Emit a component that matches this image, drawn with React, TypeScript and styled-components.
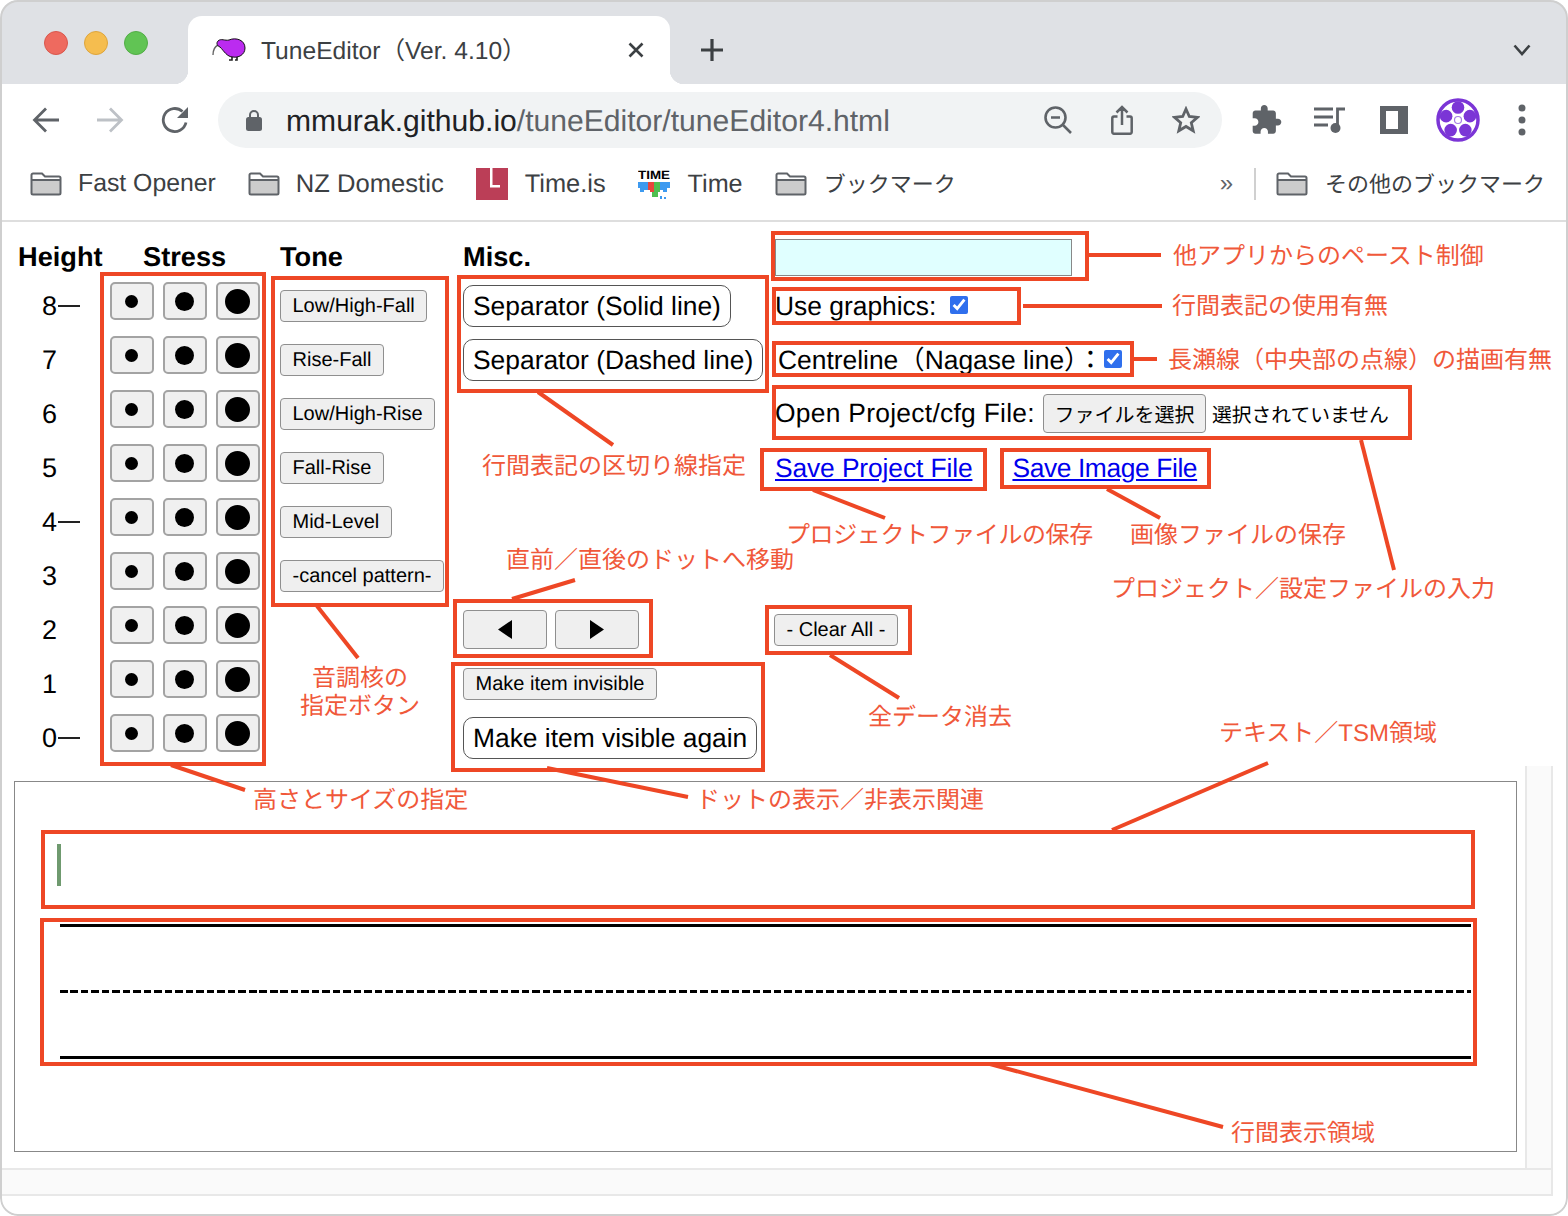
import styled, { createGlobalStyle } from "styled-components";

const UI_FONT = `"Liberation Sans", "Noto Sans CJK JP", sans-serif`;
const RED = "#ee4725";
const ICON_GREY = "#5f6368";

const HEIGHTS = [
  { label: "8", mark: true },
  { label: "7", mark: false },
  { label: "6", mark: false },
  { label: "5", mark: false },
  { label: "4", mark: true },
  { label: "3", mark: false },
  { label: "2", mark: false },
  { label: "1", mark: false },
  { label: "0", mark: true },
];
const DOT_SIZES = [13, 19, 25];
const TONES = ["Low/High-Fall", "Rise-Fall", "Low/High-Rise", "Fall-Rise", "Mid-Level", "-cancel pattern-"];

// red frames over the page: x, y, right, bottom
const FRAMES = [
  [100, 272, 266, 766],
  [271, 276, 449, 607],
  [457, 275, 769, 393],
  [771, 231, 1089, 281],
  [772, 287, 1021, 325],
  [772, 341, 1134, 377],
  [772, 385, 1412, 440],
  [760, 448, 987, 491],
  [1000, 448, 1211, 489],
  [453, 599, 653, 658],
  [451, 662, 765, 772],
  [765, 605, 912, 655],
  [41, 830, 1475, 909],
  [40, 918, 1477, 1066],
];

const LEADERS = [
  [1088, 255, 1161, 255],
  [1023, 306, 1162, 306],
  [1134, 359, 1157, 359],
  [538, 392, 613, 445],
  [813, 490, 885, 518],
  [1107, 489, 1160, 518],
  [1361, 440, 1394, 570],
  [512, 599, 575, 580],
  [317, 606, 358, 658],
  [830, 655, 899, 698],
  [547, 768, 688, 797],
  [171, 765, 245, 790],
  [1112, 830, 1268, 763],
  [990, 1064, 1223, 1127],
];

const CALLOUTS = [
  { x: 1173, y: 257, text: "他アプリからのペースト制御", tight: false },
  { x: 1172, y: 307, text: "行間表記の使用有無", tight: false },
  { x: 1168, y: 361, text: "長瀬線（中央部の点線）の描画有無", tight: false },
  { x: 482, y: 467, text: "行間表記の区切り線指定", tight: false },
  { x: 786, y: 536, text: "プロジェクトファイルの保存", tight: true },
  { x: 1130, y: 536, text: "画像ファイルの保存", tight: false },
  { x: 1111, y: 590, text: "プロジェクト／設定ファイルの入力", tight: false },
  { x: 506, y: 561, text: "直前／直後のドットへ移動", tight: false },
  { x: 868, y: 718, text: "全データ消去", tight: false },
  { x: 1219, y: 734, text: "テキスト／TSM領域", tight: false },
  { x: 696, y: 801, text: "ドットの表示／非表示関連", tight: false },
  { x: 1231, y: 1134, text: "行間表示領域", tight: false },
];

const GlobalStyle = createGlobalStyle`
  html, body {
    margin: 0;
    background: #fff;
    font-family: ${UI_FONT};
    text-rendering: geometricPrecision;
  }
  button, input {
    font-family: ${UI_FONT};
    text-rendering: geometricPrecision;
  }
`;

const Window = styled.div`
  position: relative;
  width: 1568px;
  height: 1216px;
  overflow: hidden;
  display: flex;
  flex-direction: column;
  border-radius: 18px;
  background: #fff;

  &::after {
    content: "";
    position: absolute;
    inset: 0;
    border: 2px solid #cfcfcf;
    border-radius: 18px;
    pointer-events: none;
  }
`;

/* browser chrome */
const TabStrip = styled.div`
  height: 84px;
  flex: none;
  display: flex;
  align-items: flex-end;
  background: #dfe1e5;
`;

const Lights = styled.div`
  width: 188px;
  height: 84px;
  flex: none;
  box-sizing: border-box;
  padding: 31px 0 0 44px;
  display: flex;
  gap: 16px;
`;

const Light = styled.span<{ $fill: string; $edge: string }>`
  width: 24px;
  height: 24px;
  border-radius: 50%;
  box-sizing: border-box;
  background: ${(p) => p.$fill};
  border: 1px solid ${(p) => p.$edge};
`;

const Tab = styled.div`
  position: relative;
  width: 482px;
  height: 68px;
  flex: none;
  box-sizing: border-box;
  padding: 0 26px 0 24px;
  display: flex;
  align-items: center;
  background: #fff;
  border-radius: 14px 14px 0 0;
  color: #3c4043;

  &::before,
  &::after {
    content: "";
    position: absolute;
    bottom: 0;
    width: 14px;
    height: 14px;
  }
  &::before {
    left: -14px;
    background: radial-gradient(circle at 0 0, transparent 14px, #fff 14.5px);
  }
  &::after {
    right: -14px;
    background: radial-gradient(circle at 100% 0, transparent 14px, #fff 14.5px);
  }
`;

const TabTitle = styled.span`
  margin: 0 0 2px 15px;
  font-size: 24.6px;
  white-space: nowrap;
`;

const TabClose = styled.svg`
  margin-left: auto;
`;

const NewTab = styled.svg`
  margin: 0 0 22px 30px;
`;

const TabMenu = styled.svg`
  margin: 0 37px 28px auto;
`;

const Toolbar = styled.div`
  height: 64px;
  flex: none;
  box-sizing: border-box;
  padding: 8px 0 0 32px;
  display: flex;
  align-items: center;
`;

const NavIcon = styled.svg<{ $gap: number }>`
  flex: none;
  margin-right: ${(p) => p.$gap}px;
`;

const Omnibox = styled.div`
  width: 1004px;
  height: 56px;
  flex: none;
  box-sizing: border-box;
  padding: 0 22px 0 28px;
  display: flex;
  align-items: center;
  border-radius: 28px;
  background: #f1f3f4;
`;

const Url = styled.div`
  margin: 3px 0 0 24px;
  font-size: 30.1px;
  color: ${ICON_GREY};
  white-space: nowrap;

  b {
    font-weight: 400;
    color: #202124;
  }
`;

const OmniIcons = styled.div`
  margin-left: auto;
  display: flex;
  align-items: center;
  gap: 39px;
`;

const ToolIcons = styled.div`
  margin-left: 30px;
  display: flex;
  align-items: center;
  gap: 32px;
`;

const SidePanelIcon = styled.svg`
  margin-left: 2px;
`;

const CrestIcon = styled.svg`
  margin-left: -4px;
`;

const MenuDots = styled.svg`
  margin-left: 6px;
`;

const Bookmarks = styled.div`
  height: 74px;
  flex: none;
  box-sizing: border-box;
  padding: 0 23px 0 30px;
  display: flex;
  align-items: center;
  gap: 32px;
  border-bottom: 2px solid #dedede;
`;

const Bookmark = styled.div<{ $size?: number; $gap?: number }>`
  display: flex;
  align-items: center;
  gap: ${(p) => p.$gap ?? 16}px;
  font-size: ${(p) => p.$size ?? 24.8}px;
  color: #3c4043;
  white-space: nowrap;
`;

const BookmarkCjk = styled.span`
  margin-bottom: 2px;
  font-size: 22px;
`;

const Overflow = styled.span`
  margin-left: auto;
  margin-right: -11px;
  font-size: 24px;
  color: ${ICON_GREY};
`;

const BarDivider = styled.span`
  width: 2px;
  height: 32px;
  margin-right: -12px;
  background: #d0d0d0;
`;

/* tool page */
const Controls = styled.div`
  height: 544px;
  flex: none;
  box-sizing: border-box;
  padding: 17px 0 0 18px;
  display: grid;
  grid-template-columns: 92px 170px 183px 312px 1fr;
  color: #000;
`;

const Column = styled.div`
  display: flex;
  flex-direction: column;
  align-items: flex-start;
`;

const Heading = styled.div<{ $indent?: number }>`
  height: 36px;
  flex: none;
  margin-left: ${(p) => p.$indent ?? 0}px;
  font-size: 27.2px;
  font-weight: 700;
  line-height: 36px;
  white-space: nowrap;
`;

const HeightRow = styled.div`
  height: 54px;
  flex: none;
  padding-left: 24px;
  display: flex;
  align-items: center;
  font-size: 27px;
  ${Heading} + & {
    margin-top: 4px;
  }
`;

const HeightMark = styled.span`
  width: 22px;
  height: 2px;
  margin-left: 1px;
  background: #222;
`;

const StressGrid = styled.div`
  margin: 7px 0 0 -0.5px;
  display: grid;
  grid-template-columns: repeat(3, 44px);
  grid-auto-rows: 38px;
  column-gap: 9px;
  row-gap: 16px;
`;

const StressButton = styled.button`
  padding: 0;
  display: flex;
  align-items: center;
  justify-content: center;
  background: #f0f0f0;
  border: 2px solid #a3a3a3;
  border-radius: 5px;
`;

const Dot = styled.span<{ $size: number }>`
  width: ${(p) => p.$size}px;
  height: ${(p) => p.$size}px;
  border-radius: 50%;
  background: #000;
`;

const GreyButton = styled.button<{ $top?: number; $left?: number }>`
  height: 32px;
  flex: none;
  margin-top: ${(p) => p.$top ?? 0}px;
  margin-left: ${(p) => p.$left ?? 0}px;
  padding: 0 11.5px;
  font-size: 20px;
  color: #000;
  white-space: nowrap;
  background: #efefef;
  border: 1px solid #8f8f8f;
  border-radius: 4px;
`;

const PillButton = styled.button<{ $top: number }>`
  height: 42px;
  flex: none;
  margin-top: ${(p) => p.$top}px;
  padding: 0 9px;
  font-size: 26.4px;
  color: #000;
  white-space: nowrap;
  background: #fff;
  border: 1px solid #555;
  border-radius: 10px;
`;

const StepButtons = styled.div`
  margin-top: 229px;
  display: flex;
  gap: 8px;
`;

const StepButton = styled.button`
  width: 84px;
  height: 39px;
  padding: 0;
  display: flex;
  align-items: center;
  justify-content: center;
  background: #efefef;
  border: 1px solid #8f8f8f;
  border-radius: 4px;
`;

const PasteBox = styled.input`
  width: 297px;
  height: 37px;
  flex: none;
  box-sizing: border-box;
  padding: 0;
  background: #e0ffff;
  border: 1px solid #888;
  outline: none;
`;

const OptionRow = styled.label<{ $top: number; $height: number }>`
  height: ${(p) => p.$height}px;
  flex: none;
  margin-top: ${(p) => p.$top}px;
  display: flex;
  align-items: center;
  font-size: 26.4px;
  white-space: nowrap;
`;

const LiftedText = styled.span`
  margin: 0 0 6px 3px;
`;

const FileLabel = styled.span`
  letter-spacing: 0.28px;
`;

const CheckBox = styled.input.attrs({ type: "checkbox", readOnly: true })<{ $left: number }>`
  width: 18px;
  height: 18px;
  flex: none;
  margin: 0 0 2px ${(p) => p.$left}px;
  accent-color: #2f6fed;
`;

const FileButton = styled.button`
  width: 163px;
  height: 39px;
  flex: none;
  margin-left: 8px;
  padding: 0;
  font-size: 20px;
  color: #000;
  background: #efefef;
  border: 1px solid #8f8f8f;
  border-radius: 4px;
`;

const FileState = styled.span`
  margin-left: 6px;
  font-size: 19.8px;
`;

const SaveLinks = styled.div`
  height: 36px;
  flex: none;
  margin-top: 17px;
  display: flex;
  align-items: center;
  gap: 40px;
`;

const SaveLink = styled.a<{ $spacing: number }>`
  font-size: 26.4px;
  letter-spacing: ${(p) => p.$spacing}px;
  color: #0000ee;
  text-decoration: underline;
`;

const Lower = styled.div`
  height: 430px;
  flex: none;
  display: grid;
  grid-template-columns: 1525px 28px;
  grid-template-rows: 402px 28px;
`;

const PanelCell = styled.div`
  box-sizing: border-box;
  padding: 15px 8px 16px 14px;
`;

const VTrack = styled.div`
  background: #fafafa;
  border-left: 2px solid #e8e8e8;
  border-right: 2px solid #e8e8e8;
`;

const HTrack = styled.div`
  grid-column: 1 / 3;
  background: #fafafa;
  border-top: 2px solid #e8e8e8;
  border-bottom: 2px solid #e8e8e8;
  border-right: 2px solid #e8e8e8;
`;

const Panel = styled.div`
  height: 371px;
  box-sizing: border-box;
  padding: 50px 0 0 45px;
  background: #fff;
  border: 1px solid #888;
`;

const TextRow = styled.div`
  height: 92px;
  box-sizing: border-box;
  padding-top: 12px;
`;

const Caret = styled.div`
  width: 4px;
  height: 42px;
  margin-left: -3px;
  background: #6f9a6f;
`;

const Staff = styled.div`
  width: 1411px;
  height: 135px;
  display: flex;
  flex-direction: column;
  justify-content: space-between;
`;

const SolidRule = styled.div`
  height: 3px;
  background: #000;
`;

const DashedRule = styled.div`
  height: 3px;
  background: repeating-linear-gradient(to right, #000 0 7.5px, transparent 7.5px 10.5px);
`;

/* annotation layer */
const Frame = styled.div<{ $x: number; $y: number; $r: number; $b: number }>`
  position: absolute;
  left: ${(p) => p.$x}px;
  top: ${(p) => p.$y}px;
  width: ${(p) => p.$r - p.$x}px;
  height: ${(p) => p.$b - p.$y}px;
  box-sizing: border-box;
  border: 4px solid ${RED};
`;

const Callout = styled.span<{ $x: number; $y: number; $tight?: boolean }>`
  position: absolute;
  left: ${(p) => p.$x}px;
  top: ${(p) => p.$y}px;
  transform: translateY(-50%);
  font-size: 24px;
  line-height: 30px;
  letter-spacing: ${(p) => (p.$tight ? "-0.4px" : "0")};
  color: #f0583a;
  white-space: nowrap;
`;

const MaskedCallout = styled(Callout)`
  padding: 0 38px;
  margin-left: -38px;
  background: #fff;
`;

const CenteredCallout = styled.div`
  position: absolute;
  left: 260px;
  top: 665px;
  width: 200px;
  font-size: 24px;
  line-height: 28px;
  color: #f0583a;
  text-align: center;
`;

const LeaderLayer = styled.svg`
  position: absolute;
  inset: 0;
  pointer-events: none;
`;

function FolderIcon() {
  return (
    <svg width="32" height="24" viewBox="0 0 32 24">
      <path d="M1.5 8H30.5V21a1.5 1.5 0 0 1-1.5 1.5H3A1.5 1.5 0 0 1 1.5 21Z" fill="#ccc" />
      <path
        d="M1.5 21V3A1.5 1.5 0 0 1 3 1.5H12L15 4.5H29A1.5 1.5 0 0 1 30.5 6V21A1.5 1.5 0 0 1 29 22.5H3A1.5 1.5 0 0 1 1.5 21ZM1.5 8H30.5"
        fill="none"
        stroke={ICON_GREY}
        strokeWidth="2"
      />
    </svg>
  );
}

function KiwiIcon() {
  return (
    <svg width="34" height="24" viewBox="0 0 34 24">
      <path d="M6 7C2 9 1 13 1 17" fill="none" stroke="#666" strokeWidth="1.4" />
      <path d="M20 18V22H17M25 18V22H23" fill="none" stroke="#222" strokeWidth="1.6" />
      <path
        d="M6 3C9 0 13 3 17 2C24 -1 33 2 33 10C33 17 26 20 21 19C15 19 12 13 8 9C5 8 4 5 6 3Z"
        fill="#bb2bf0"
        stroke="#111"
        strokeWidth="1"
      />
    </svg>
  );
}

function TimeIsIcon() {
  return (
    <svg width="32" height="32" viewBox="0 0 32 32">
      <rect width="32" height="32" fill="#bb3e57" />
      <path d="M14 0h2.500v17H24v2.500H14Z" fill="#fff" />
    </svg>
  );
}

const TimeLogoWord = styled.text`
  font-family: "Liberation Sans", sans-serif;
  font-size: 12px;
  font-weight: 700;
`;

function TimeIcon() {
  return (
    <svg width="32" height="32" viewBox="0 0 32 32">
      <TimeLogoWord x="0" y="11" textLength="32" lengthAdjust="spacingAndGlyphs">
        TIME
      </TimeLogoWord>
      <path d="M0 14H10V22H6V24H2V20H0Z" fill="#3d9af0" />
      <path d="M22 14H32V20H29V24H25V22H22Z" fill="#3d9af0" />
      <path d="M10 14H16V24H12V22H10Z" fill="#e8453c" />
      <path d="M16 14H22V24H20V29H14V24H16Z" fill="#4fbf4f" />
      <path d="M22 28h2v3h-2ZM26 29h2v2h-2Z" fill="#3d9af0" />
    </svg>
  );
}

function PlumCrest() {
  const petals = [0, 72, 144, 216, 288].map((deg) => {
    const rad = ((deg - 90) * Math.PI) / 180;
    return { cx: 22 + 12.5 * Math.cos(rad), cy: 22 + 12.5 * Math.sin(rad) };
  });
  return (
    <CrestIcon width="44" height="44" viewBox="0 0 44 44">
      <circle cx="22" cy="22" r="20" fill="#fff" stroke="#7b35d6" strokeWidth="3.5" />
      {petals.map((p) => (
        <circle key={p.cx} cx={p.cx} cy={p.cy} r="6.300" fill="#7b35d6" />
      ))}
      <circle cx="22" cy="22" r="3.500" fill="none" stroke="#a77de6" strokeWidth="1.200" />
    </CrestIcon>
  );
}

function BrowserChrome() {
  return (
    <>
      <TabStrip>
        <Lights>
          <Light $fill="#ee6a5f" $edge="#d9574c" />
          <Light $fill="#f5bd4f" $edge="#dea53c" />
          <Light $fill="#61c454" $edge="#52ad46" />
        </Lights>
        <Tab>
          <KiwiIcon />
          <TabTitle>TuneEditor（Ver. 4.10）</TabTitle>
          <TabClose width="16" height="16" viewBox="0 0 16 16">
            <path d="M1.500 1.500L14.500 14.500M14.500 1.500L1.500 14.500" stroke="#3c4043" strokeWidth="2.600" />
          </TabClose>
        </Tab>
        <NewTab width="24" height="24" viewBox="0 0 24 24">
          <path d="M12 1V23M1 12H23" stroke="#3c4043" strokeWidth="3.200" />
        </NewTab>
        <TabMenu width="18" height="12" viewBox="0 0 18 12">
          <path d="M1.500 1.500L9 10L16.500 1.500" fill="none" stroke="#3c4043" strokeWidth="2.600" />
        </TabMenu>
      </TabStrip>

      <Toolbar>
        <NavIcon $gap={36} width="28" height="28" viewBox="0 0 28 28">
          <path d="M27 14H3M14 2.500L2.500 14L14 25.500" fill="none" stroke={ICON_GREY} strokeWidth="2.800" />
        </NavIcon>
        <NavIcon $gap={37} width="28" height="28" viewBox="0 0 28 28">
          <path d="M1 14H25M14 2.500L25.500 14L14 25.500" fill="none" stroke="#bdc1c6" strokeWidth="2.800" />
        </NavIcon>
        <NavIcon $gap={29} width="28" height="28" viewBox="0 0 28 28">
          <path d="M25 16.500A11.500 11.500 0 1 1 21.500 5.500" fill="none" stroke={ICON_GREY} strokeWidth="2.800" />
          <path d="M27 1V12H16Z" fill={ICON_GREY} />
        </NavIcon>
        <Omnibox>
          <svg width="16" height="22" viewBox="0 0 16 22">
            <path d="M4 9V6a4 4 0 0 1 8 0V9" fill="none" stroke={ICON_GREY} strokeWidth="2" />
            <rect y="8" width="16" height="14" rx="2.500" fill={ICON_GREY} />
          </svg>
          <Url>
            <b>mmurak.github.io</b>/tuneEditor/tuneEditor4.html
          </Url>
          <OmniIcons>
            <svg width="28" height="28" viewBox="0 0 28 28">
              <circle cx="11.500" cy="11.500" r="10" fill="none" stroke={ICON_GREY} strokeWidth="2.600" />
              <path d="M18.500 18.500L27 27M7 11.500H16" stroke={ICON_GREY} strokeWidth="2.600" />
            </svg>
            <svg width="22" height="30" viewBox="0 0 22 30">
              <path
                d="M6.500 11.500H3A1.800 1.800 0 0 0 1.300 13.300V27A1.800 1.800 0 0 0 3 28.700H19A1.800 1.800 0 0 0 20.700 27V13.300A1.800 1.800 0 0 0 19 11.500H15.500M11 20V2M5.500 7.500L11 2L16.500 7.500"
                fill="none"
                stroke={ICON_GREY}
                strokeWidth="2.500"
              />
            </svg>
            <svg width="28" height="28" viewBox="0 0 28 28">
              <path
                d="M14 3L17.300 10.500L25.500 11.300L19.300 16.700L21.200 24.800L14 20.500L6.800 24.800L8.700 16.700L2.500 11.300L10.700 10.500Z"
                fill="none"
                stroke={ICON_GREY}
                strokeWidth="2.800"
              />
            </svg>
          </OmniIcons>
        </Omnibox>
        <ToolIcons>
          <svg width="30" height="30" viewBox="1.500 1 22 22">
            <path
              d="M20.500 11H19V7c0-1.100-.9-2-2-2h-4V3.500C13 2.120 11.880 1 10.500 1S8 2.120 8 3.500V5H4c-1.100 0-1.990.9-1.990 2v3.800H3.500c1.490 0 2.700 1.210 2.700 2.700s-1.210 2.700-2.700 2.700H2V20c0 1.100.9 2 2 2h3.800v-1.500c0-1.490 1.210-2.700 2.700-2.700 1.490 0 2.700 1.210 2.700 2.700V22H17c1.100 0 2-.9 2-2v-4h1.500c1.380 0 2.500-1.120 2.500-2.500S21.880 11 20.500 11z"
              fill={ICON_GREY}
            />
          </svg>
          <svg width="32" height="28" viewBox="0 0 32 28">
            <path d="M0 3H19M0 11H19M0 19H14" stroke={ICON_GREY} strokeWidth="2.800" />
            <path d="M23.500 21V3H31" fill="none" stroke={ICON_GREY} strokeWidth="2.800" />
            <circle cx="21.500" cy="22" r="5" fill={ICON_GREY} />
          </svg>
          <SidePanelIcon width="28" height="28" viewBox="0 0 28 28">
            <rect width="28" height="28" fill={ICON_GREY} />
            <rect x="6" y="5" width="12" height="18" fill="#fff" />
          </SidePanelIcon>
          <PlumCrest />
          <MenuDots width="8" height="32" viewBox="0 0 8 32">
            <circle cx="4" cy="4" r="3.500" fill={ICON_GREY} />
            <circle cx="4" cy="16" r="3.500" fill={ICON_GREY} />
            <circle cx="4" cy="28" r="3.500" fill={ICON_GREY} />
          </MenuDots>
        </ToolIcons>
      </Toolbar>

      <Bookmarks>
        <Bookmark>
          <FolderIcon />
          Fast Opener
        </Bookmark>
        <Bookmark $size={25.6}>
          <FolderIcon />
          NZ Domestic
        </Bookmark>
        <Bookmark $gap={17} $size={25.4}>
          <TimeIsIcon />
          Time.is
        </Bookmark>
        <Bookmark $gap={18} $size={25.2}>
          <TimeIcon />
          Time
        </Bookmark>
        <Bookmark $gap={17}>
          <FolderIcon />
          <BookmarkCjk>ブックマーク</BookmarkCjk>
        </Bookmark>
        <Overflow>»</Overflow>
        <BarDivider />
        <Bookmark $gap={17}>
          <FolderIcon />
          <BookmarkCjk>その他のブックマーク</BookmarkCjk>
        </Bookmark>
      </Bookmarks>
    </>
  );
}

function EditorControls() {
  return (
    <Controls>
      <Column>
        <Heading>Height</Heading>
        {HEIGHTS.map((h) => (
          <HeightRow key={h.label}>
            {h.label}
            {h.mark && <HeightMark />}
          </HeightRow>
        ))}
      </Column>

      <Column>
        <Heading $indent={33}>Stress</Heading>
        <StressGrid>
          {HEIGHTS.flatMap((h) =>
            DOT_SIZES.map((size) => (
              <StressButton key={`${h.label}-${size}`}>
                <Dot $size={size} />
              </StressButton>
            ))
          )}
        </StressGrid>
      </Column>

      <Column>
        <Heading>Tone</Heading>
        {TONES.map((tone, i) => (
          <GreyButton key={tone} $top={i === 0 ? 15 : 22}>
            {tone}
          </GreyButton>
        ))}
      </Column>

      <Column>
        <Heading>Misc.</Heading>
        <PillButton $top={10}>Separator (Solid line)</PillButton>
        <PillButton $top={12}>Separator (Dashed line)</PillButton>
        <StepButtons>
          <StepButton>
            <svg width="14" height="19" viewBox="0 0 14 19">
              <path d="M14 0V19L0 9.500Z" fill="#000" />
            </svg>
          </StepButton>
          <StepButton>
            <svg width="14" height="19" viewBox="0 0 14 19">
              <path d="M0 0V19L14 9.500Z" fill="#000" />
            </svg>
          </StepButton>
        </StepButtons>
        <GreyButton $top={19}>Make item invisible</GreyButton>
        <PillButton $top={17}>Make item visible again</PillButton>
      </Column>

      <Column>
        <PasteBox />
        <OptionRow $top={12} $height={36}>
          Use graphics:
          <CheckBox $left={14} defaultChecked />
        </OptionRow>
        <OptionRow $top={18} $height={36}>
          <LiftedText>Centreline（Nagase line）：</LiftedText>
          <CheckBox $left={0} defaultChecked />
        </OptionRow>
        <OptionRow $top={16} $height={39}>
          <FileLabel>Open Project/cfg File:</FileLabel>
          <FileButton>ファイルを選択</FileButton>
          <FileState>選択されていません</FileState>
        </OptionRow>
        <SaveLinks>
          <SaveLink $spacing={-0.12} href="#project">
            Save Project File
          </SaveLink>
          <SaveLink $spacing={-0.4} href="#image">
            Save Image File
          </SaveLink>
        </SaveLinks>
        <GreyButton $top={128} $left={-1}>
          - Clear All -
        </GreyButton>
      </Column>
    </Controls>
  );
}

function Annotations() {
  return (
    <>
      {FRAMES.map(([x, y, r, b]) => (
        <Frame key={`${x}-${y}`} $x={x} $y={y} $r={r} $b={b} />
      ))}
      {CALLOUTS.map((c) => (
        <Callout key={c.text} $x={c.x} $y={c.y} $tight={c.tight}>
          {c.text}
        </Callout>
      ))}
      <MaskedCallout $x={253} $y={801}>
        高さとサイズの指定
      </MaskedCallout>
      <CenteredCallout>
        音調核の
        <br />
        指定ボタン
      </CenteredCallout>
      <LeaderLayer width="1568" height="1216" viewBox="0 0 1568 1216">
        {LEADERS.map(([x1, y1, x2, y2]) => (
          <line key={`${x1}-${y1}`} x1={x1} y1={y1} x2={x2} y2={y2} stroke={RED} strokeWidth="4" />
        ))}
      </LeaderLayer>
    </>
  );
}

export default function App() {
  return (
    <Window>
      <GlobalStyle />
      <BrowserChrome />
      <EditorControls />
      <Lower>
        <PanelCell>
          <Panel>
            <TextRow>
              <Caret />
            </TextRow>
            <Staff>
              <SolidRule />
              <DashedRule />
              <SolidRule />
            </Staff>
          </Panel>
        </PanelCell>
        <VTrack />
        <HTrack />
      </Lower>
      <Annotations />
    </Window>
  );
}
